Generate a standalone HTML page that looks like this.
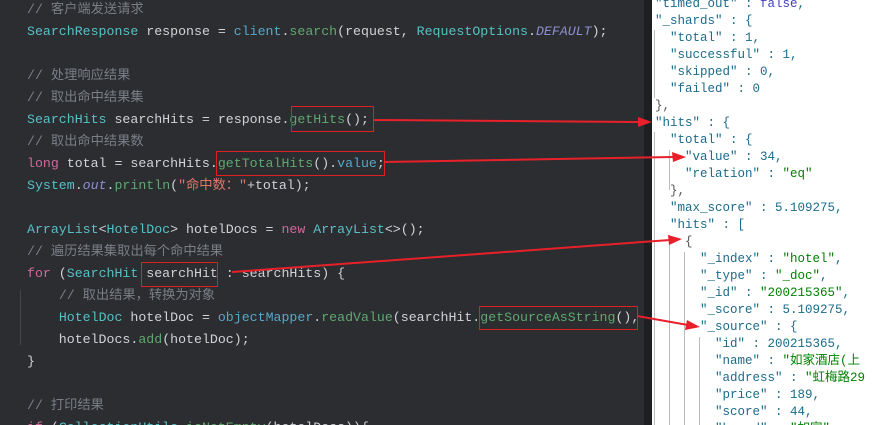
<!DOCTYPE html>
<html style="margin:0;width:876px;height:425px;overflow:hidden"><head><meta charset="utf-8"><style>
body{margin:0;width:876px;height:425px;overflow:hidden;background:#2b2d30;position:relative;font-family:"Liberation Mono","Noto Sans CJK SC",monospace}
#code{position:absolute;left:27px;top:-1px;font-size:13.25px;line-height:22px;color:#d0d2d8;white-space:pre}
.c{color:#7a7e85}.t{color:#56c1c6}.m{color:#57a8c9}.g{color:#5fa86f}.k{color:#d1689a}.s{color:#e0766a}.i{color:#8f8fd0;font-style:italic}
#strip{position:absolute;left:644px;top:0;width:8px;height:425px;background:#1e1f22}
#json{position:absolute;left:652px;top:0;width:224px;height:425px;background:#fff;overflow:hidden}
#jt{position:absolute;left:3px;top:-4px;font-size:12.5px;line-height:17px;white-space:pre;color:#1b6b8a}
.n{color:#1b6b8a}.v{color:#008000}.f{color:#4040c0}.p{color:#555}
.gl{position:absolute;width:1px;background:#bbb}
.box{position:absolute;border:1px solid #e02020}
</style></head><body>
<div id="code"><span class="c">// 客户端发送请求</span>
<span class="t">SearchResponse</span> response = <span class="m">client</span>.<span class="g">search</span>(request, <span class="t">RequestOptions</span>.<span class="i">DEFAULT</span>);

<span class="c">// 处理响应结果</span>
<span class="c">// 取出命中结果集</span>
<span class="t">SearchHits</span> searchHits = response.<span class="g">getHits</span>();
<span class="c">// 取出命中结果数</span>
<span class="k">long</span> total = searchHits.<span class="g">getTotalHits</span>().<span class="m">value</span>;
<span class="t">System</span>.<span class="i">out</span>.<span class="g">println</span>(<span class="s">"命中数："</span>+total);

<span class="t">ArrayList</span>&lt;<span class="t">HotelDoc</span>&gt; hotelDocs = <span class="k">new</span> <span class="t">ArrayList</span>&lt;&gt;();
<span class="c">// 遍历结果集取出每个命中结果</span>
<span class="k">for</span> (<span class="t">SearchHit</span> searchHit : searchHits) {
    <span class="c">// 取出结果，转换为对象</span>
    <span class="t">HotelDoc</span> hotelDoc = <span class="m">objectMapper</span>.<span class="g">readValue</span>(searchHit.<span class="g">getSourceAsString</span>(),
    hotelDocs.<span class="g">add</span>(hotelDoc);
}

<span class="c">// 打印结果</span>
<span class="k">if</span> (<span class="t">CollectionUtils</span>.<span class="g">isNotEmpty</span>(hotelDocs)){</div>
<div class="gl" style="left:20px;top:290px;height:55px;background:#444"></div>
<div class="box" style="left:291px;top:106px;width:81px;height:24px"></div>
<div class="box" style="left:216px;top:151px;width:167px;height:23px"></div>
<div class="box" style="left:141px;top:262px;width:75px;height:23px"></div>
<div class="box" style="left:479px;top:306px;width:157px;height:22px"></div>
<div id="strip"></div>
<div id="json">
<div class="gl" style="left:2px;top:30px;height:68px"></div>
<div class="gl" style="left:2px;top:132px;height:293px"></div>
<div class="gl" style="left:17px;top:150px;height:40px"></div>
<div class="gl" style="left:17px;top:235px;height:190px"></div>
<div class="gl" style="left:32px;top:252px;height:173px"></div>
<div class="gl" style="left:47px;top:337px;height:88px"></div>
<div id="jt">"timed_out" : <span class="f">false</span>,
"_shards" : {
  "total" : 1,
  "successful" : 1,
  "skipped" : 0,
  "failed" : 0
<span class="p">},</span>
"hits" : {
  "total" : {
    "value" : 34,
    "relation" : <span class="v">"eq"</span>
  <span class="p">},</span>
  "max_score" : 5.109275,
  "hits" : [
    <span class="p">{</span>
      "_index" : <span class="v">"hotel"</span>,
      "_type" : <span class="v">"_doc"</span>,
      "_id" : <span class="v">"200215365"</span>,
      "_score" : 5.109275,
      "_source" : {
        "id" : 200215365,
        "name" : <span class="v">"如家酒店(上</span>
        "address" : <span class="v">"虹梅路29</span>
        "price" : 189,
        "score" : 44,
        "brand" : <span class="v">"如家"</span></div>
</div>
<svg width="876" height="425" style="position:absolute;left:0;top:0" fill="#e8202a" stroke="#e8202a" stroke-width="2">
<line x1="373" y1="120" x2="640" y2="122"/><polygon points="652,122 638,117 638,127" stroke="none"/>
<line x1="384" y1="162" x2="674" y2="157"/><polygon points="686,157 672,152 673,162" stroke="none"/>
<line x1="232" y1="272" x2="670" y2="240"/><polygon points="682,239 668,235 669,245" stroke="none"/>
<line x1="637" y1="316" x2="688" y2="325"/><polygon points="700,327 687,320 685,330" stroke="none"/>
</svg>
</body></html>
